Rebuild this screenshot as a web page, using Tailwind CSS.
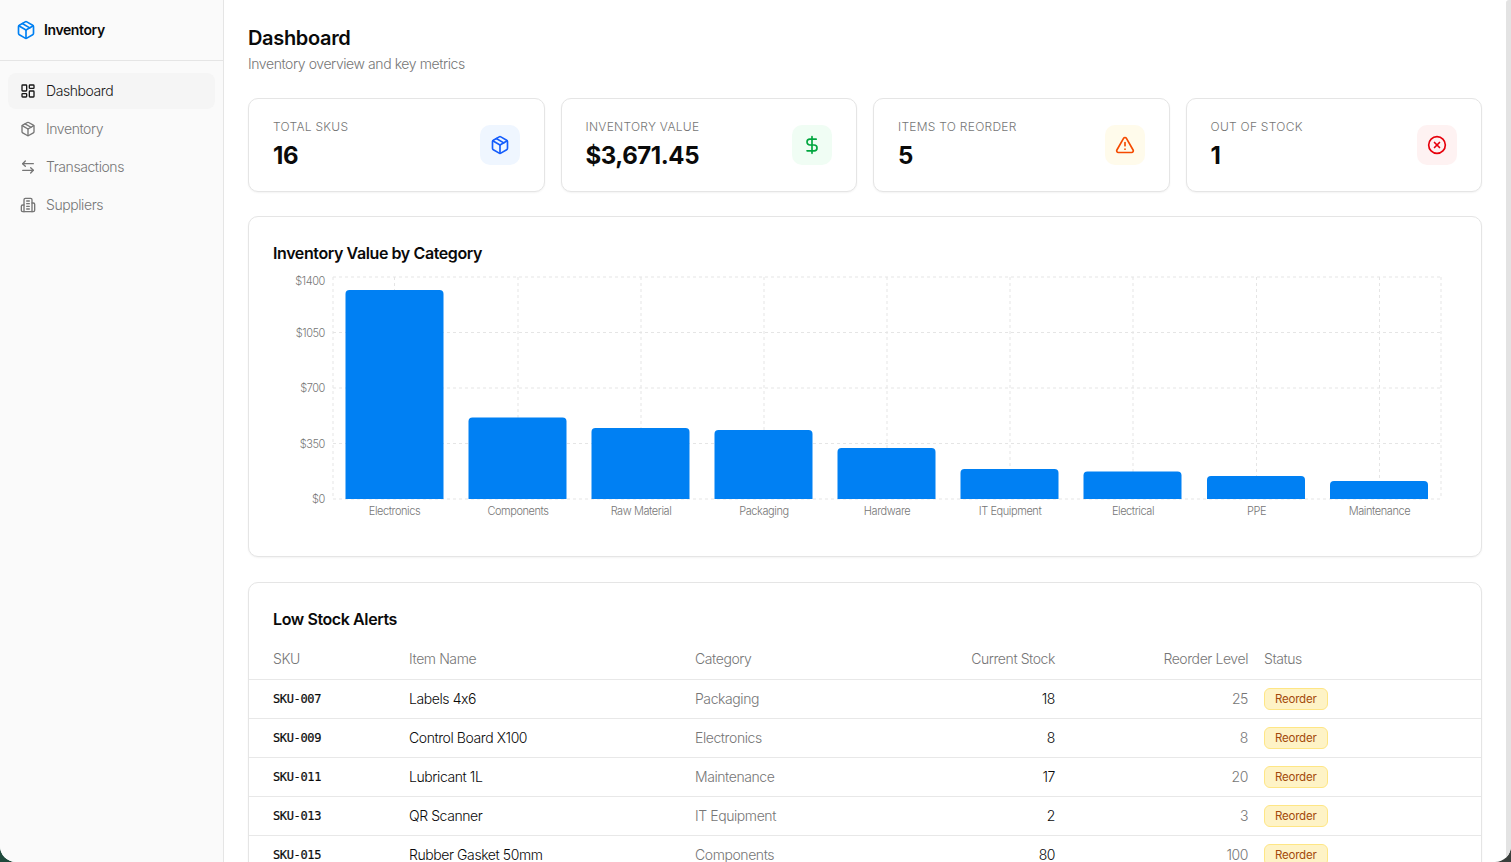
<!DOCTYPE html>
<html lang="en">
<head>
<meta charset="utf-8">
<title>Inventory</title>
<script src="https://cdn.jsdelivr.net/npm/@tailwindcss/browser@4"></script>
</head>
<body class="h-screen overflow-hidden bg-[linear-gradient(90deg,#1f4a3c,#3a3f3c)] font-['Inter',sans-serif] font-[350] tracking-[-0.42px] text-[#0a0a0a] [font-feature-settings:'calt'_0]">
<div class="relative flex h-[862px] overflow-hidden rounded-b-[16px] bg-white">
  <aside class="w-[224px] shrink-0 border-r border-[#e5e5e5] bg-[#fafafa]">
    <div class="flex h-[61px] items-center gap-[8px] border-b border-[#e5e5e5] pb-[1px] pl-[16px]">
      <svg class="size-[20px] text-[#0080f2]" viewBox="0 0 24 24" fill="none" stroke="currentColor" stroke-width="2" stroke-linecap="round" stroke-linejoin="round"><path d="m7.5 4.27 9 5.15"/><path d="M21 8a2 2 0 0 0-1-1.73l-7-4a2 2 0 0 0-2 0l-7 4A2 2 0 0 0 3 8v8a2 2 0 0 0 1 1.73l7 4a2 2 0 0 0 2 0l7-4A2 2 0 0 0 21 16Z"/><path d="m3.3 7 8.7 5 8.7-5"/><path d="M12 22V12"/></svg>
      <span class="text-[14px] font-semibold tracking-[-0.4px]">Inventory</span>
    </div>
    <nav class="flex flex-col gap-[2px] px-[8px] pt-[12px] text-[14px] text-[#767676]">
      <a class="flex h-[36px] items-center gap-[10px] rounded-[8px] bg-[#f5f5f5] pb-[1px] pl-[12px] text-[#171717]">
        <svg class="size-[16px]" viewBox="0 0 24 24" fill="none" stroke="currentColor" stroke-width="2" stroke-linecap="round" stroke-linejoin="round"><rect x="3" y="3" width="7" height="9" rx="1"/><rect x="14" y="3" width="7" height="5" rx="1"/><rect x="14" y="12" width="7" height="9" rx="1"/><rect x="3" y="16" width="7" height="5" rx="1"/></svg>
        Dashboard
      </a>
      <a class="flex h-[36px] items-center gap-[10px] rounded-[8px] pb-[1px] pl-[12px]">
        <svg class="size-[16px]" viewBox="0 0 24 24" fill="none" stroke="currentColor" stroke-width="2" stroke-linecap="round" stroke-linejoin="round"><path d="m7.5 4.27 9 5.15"/><path d="M21 8a2 2 0 0 0-1-1.73l-7-4a2 2 0 0 0-2 0l-7 4A2 2 0 0 0 3 8v8a2 2 0 0 0 1 1.73l7 4a2 2 0 0 0 2 0l7-4A2 2 0 0 0 21 16Z"/><path d="m3.3 7 8.7 5 8.7-5"/><path d="M12 22V12"/></svg>
        Inventory
      </a>
      <a class="flex h-[36px] items-center gap-[10px] rounded-[8px] pb-[1px] pl-[12px]">
        <svg class="size-[16px]" viewBox="0 0 24 24" fill="none" stroke="currentColor" stroke-width="2" stroke-linecap="round" stroke-linejoin="round"><path d="M8 3 4 7l4 4"/><path d="M4 7h16"/><path d="m16 21 4-4-4-4"/><path d="M20 17H4"/></svg>
        Transactions
      </a>
      <a class="flex h-[36px] items-center gap-[10px] rounded-[8px] pb-[1px] pl-[12px]">
        <svg class="size-[16px]" viewBox="0 0 24 24" fill="none" stroke="currentColor" stroke-width="2" stroke-linecap="round" stroke-linejoin="round"><path d="M6 22V4a2 2 0 0 1 2-2h8a2 2 0 0 1 2 2v18Z"/><path d="M6 12H4a2 2 0 0 0-2 2v6a2 2 0 0 0 2 2h2"/><path d="M18 9h2a2 2 0 0 1 2 2v9a2 2 0 0 1-2 2h-2"/><path d="M10 6h4"/><path d="M10 10h4"/><path d="M10 14h4"/><path d="M10 18h4"/></svg>
        Suppliers
      </a>
    </nav>
  </aside>

  <main class="min-w-0 flex-1 pl-[24px] pr-[29px] pt-[24px]">
    <h1 class="text-[20px] leading-[28px] font-semibold tracking-[-0.33px]">Dashboard</h1>
    <p class="mt-[2px] text-[14px] leading-[20px] text-[#767676]">Inventory overview and key metrics</p>

    <section class="mt-[24px] grid grid-cols-4 gap-[16px]">
      <div class="flex items-center justify-between rounded-[10px] border border-[#e5e5e5] bg-white px-[24px] py-[20px] shadow-xs">
        <div>
          <p class="text-[12px] leading-[16px] tracking-[0.27px] text-[#767676]">TOTAL SKUS</p>
          <p class="mt-[5px] text-[24px] leading-[31px] font-bold tracking-[-0.44px]">16</p>
        </div>
        <div class="flex size-[40px] items-center justify-center rounded-[10px] bg-blue-50 text-blue-600">
          <svg class="size-[20px]" viewBox="0 0 24 24" fill="none" stroke="currentColor" stroke-width="2" stroke-linecap="round" stroke-linejoin="round"><path d="m7.5 4.27 9 5.15"/><path d="M21 8a2 2 0 0 0-1-1.73l-7-4a2 2 0 0 0-2 0l-7 4A2 2 0 0 0 3 8v8a2 2 0 0 0 1 1.73l7 4a2 2 0 0 0 2 0l7-4A2 2 0 0 0 21 16Z"/><path d="m3.3 7 8.7 5 8.7-5"/><path d="M12 22V12"/></svg>
        </div>
      </div>
      <div class="flex items-center justify-between rounded-[10px] border border-[#e5e5e5] bg-white px-[24px] py-[20px] shadow-xs">
        <div>
          <p class="text-[12px] leading-[16px] tracking-[0.27px] text-[#767676]">INVENTORY VALUE</p>
          <p class="mt-[5px] text-[24px] leading-[31px] font-bold tracking-[-0.44px]">$3,671.45</p>
        </div>
        <div class="flex size-[40px] items-center justify-center rounded-[10px] bg-green-50 text-green-600">
          <svg class="size-[20px]" viewBox="0 0 24 24" fill="none" stroke="currentColor" stroke-width="2" stroke-linecap="round" stroke-linejoin="round"><line x1="12" x2="12" y1="2" y2="22"/><path d="M17 5H9.5a3.5 3.5 0 0 0 0 7h5a3.5 3.5 0 0 1 0 7H6"/></svg>
        </div>
      </div>
      <div class="flex items-center justify-between rounded-[10px] border border-[#e5e5e5] bg-white px-[24px] py-[20px] shadow-xs">
        <div>
          <p class="text-[12px] leading-[16px] tracking-[0.27px] text-[#767676]">ITEMS TO REORDER</p>
          <p class="mt-[5px] text-[24px] leading-[31px] font-bold tracking-[-0.44px]">5</p>
        </div>
        <div class="flex size-[40px] items-center justify-center rounded-[10px] bg-amber-50 text-orange-600">
          <svg class="size-[20px]" viewBox="0 0 24 24" fill="none" stroke="currentColor" stroke-width="2" stroke-linecap="round" stroke-linejoin="round"><path d="m21.73 18-8-14a2 2 0 0 0-3.48 0l-8 14A2 2 0 0 0 4 21h16a2 2 0 0 0 1.73-3"/><path d="M12 9v4"/><path d="M12 17h.01"/></svg>
        </div>
      </div>
      <div class="flex items-center justify-between rounded-[10px] border border-[#e5e5e5] bg-white px-[24px] py-[20px] shadow-xs">
        <div>
          <p class="text-[12px] leading-[16px] tracking-[0.27px] text-[#767676]">OUT OF STOCK</p>
          <p class="mt-[5px] text-[24px] leading-[31px] font-bold tracking-[-0.44px]">1</p>
        </div>
        <div class="flex size-[40px] items-center justify-center rounded-[10px] bg-red-50 text-red-600">
          <svg class="size-[20px]" viewBox="0 0 24 24" fill="none" stroke="currentColor" stroke-width="2" stroke-linecap="round" stroke-linejoin="round"><circle cx="12" cy="12" r="10"/><path d="m15 9-6 6"/><path d="m9 9 6 6"/></svg>
        </div>
      </div>
    </section>

    <section class="mt-[24px] h-[341px] rounded-[10px] border border-[#e5e5e5] bg-white px-[24px] pt-[25px] shadow-xs">
      <h2 class="mb-[8px] text-[16px] leading-[22px] font-semibold tracking-[-0.4px]">Inventory Value by Category</h2>
      <svg class="block" width="1184" height="260" viewBox="0 0 1184 260" font-family="Inter, sans-serif" font-size="11" fill="#767676" letter-spacing="-0.42">
        <g stroke="#e5e5e5" stroke-dasharray="3 3" fill="none">
          <path d="M60 5H1168M60 60.5H1168M60 116H1168M60 171.500H1168M60 227H1168"/>
          <path d="M60 5V227M121.500 5V227M245 5V227M368 5V227M491 5V227M614 5V227M737 5V227M860 5V227M983.500 5V227M1106.500 5V227M1168 5V227"/>
        </g>
        <g fill="#0080f3">
          <path d="M72.500 227V22a4 4 0 0 1 4-4h90a4 4 0 0 1 4 4V227Z"/>
          <path d="M195.500 227V149.500a4 4 0 0 1 4-4h90a4 4 0 0 1 4 4V227Z"/>
          <path d="M318.500 227V160a4 4 0 0 1 4-4h90a4 4 0 0 1 4 4V227Z"/>
          <path d="M441.500 227V162a4 4 0 0 1 4-4h90a4 4 0 0 1 4 4V227Z"/>
          <path d="M564.500 227V180a4 4 0 0 1 4-4h90a4 4 0 0 1 4 4V227Z"/>
          <path d="M687.500 227V201a4 4 0 0 1 4-4h90a4 4 0 0 1 4 4V227Z"/>
          <path d="M810.500 227V203.500a4 4 0 0 1 4-4h90a4 4 0 0 1 4 4V227Z"/>
          <path d="M934 227V208a4 4 0 0 1 4-4h90a4 4 0 0 1 4 4V227Z"/>
          <path d="M1057 227V213a4 4 0 0 1 4-4h90a4 4 0 0 1 4 4V227Z"/>
        </g>
        <g text-anchor="end">
          <text x="52" y="13">$1400</text>
          <text x="52" y="64.500">$1050</text>
          <text x="52" y="120">$700</text>
          <text x="52" y="175.500">$350</text>
          <text x="52" y="231">$0</text>
        </g>
        <g text-anchor="middle">
          <text x="121.500" y="243">Electronics</text>
          <text x="245" y="243">Components</text>
          <text x="368" y="243">Raw Material</text>
          <text x="491" y="243">Packaging</text>
          <text x="614" y="243">Hardware</text>
          <text x="737" y="243">IT Equipment</text>
          <text x="860" y="243">Electrical</text>
          <text x="983.500" y="243">PPE</text>
          <text x="1106.500" y="243">Maintenance</text>
        </g>
      </svg>
    </section>

    <section class="mt-[25px] rounded-[10px] border border-[#e5e5e5] bg-white pt-[24px] shadow-xs">
      <h2 class="px-[24px] text-[16px] leading-[24px] font-semibold tracking-[-0.4px]">Low Stock Alerts</h2>
      <table class="mt-[8px] w-full table-fixed border-collapse text-[14px]">
        <colgroup>
          <col class="w-[152px]"><col class="w-[286px]"><col class="w-[200px]"><col class="w-[176px]"><col class="w-[193px]"><col>
        </colgroup>
        <thead>
          <tr class="h-[40px] border-b border-[#e8e8e8] text-[#767676]">
            <th class="pl-[24px] text-left font-[350]">SKU</th>
            <th class="px-[8px] text-left font-[350]">Item Name</th>
            <th class="px-[8px] text-left font-[350]">Category</th>
            <th class="px-[8px] text-right font-[350]">Current Stock</th>
            <th class="px-[8px] text-right font-[350]">Reorder Level</th>
            <th class="px-[8px] text-left font-[350]">Status</th>
          </tr>
        </thead>
        <tbody>
          <tr class="h-[39px] border-b border-[#e8e8e8]">
            <td class="pl-[24px] font-['DejaVu_Sans_Mono',monospace] text-[12px] tracking-[-0.37px] [-webkit-text-stroke:0.2px]">SKU-007</td>
            <td class="px-[8px]">Labels 4x6</td>
            <td class="px-[8px] text-[#767676]">Packaging</td>
            <td class="px-[8px] text-right">18</td>
            <td class="px-[8px] text-right text-[#767676]">25</td>
            <td class="px-[8px]"><span class="inline-flex h-[22px] items-center rounded-[6px] border border-amber-200 bg-amber-100 px-[10px] text-[11.5px] font-normal tracking-[-0.22px] text-[#a34a0c]">Reorder</span></td>
          </tr>
          <tr class="h-[39px] border-b border-[#e8e8e8]">
            <td class="pl-[24px] font-['DejaVu_Sans_Mono',monospace] text-[12px] tracking-[-0.37px] [-webkit-text-stroke:0.2px]">SKU-009</td>
            <td class="px-[8px]">Control Board X100</td>
            <td class="px-[8px] text-[#767676]">Electronics</td>
            <td class="px-[8px] text-right">8</td>
            <td class="px-[8px] text-right text-[#767676]">8</td>
            <td class="px-[8px]"><span class="inline-flex h-[22px] items-center rounded-[6px] border border-amber-200 bg-amber-100 px-[10px] text-[11.5px] font-normal tracking-[-0.22px] text-[#a34a0c]">Reorder</span></td>
          </tr>
          <tr class="h-[39px] border-b border-[#e8e8e8]">
            <td class="pl-[24px] font-['DejaVu_Sans_Mono',monospace] text-[12px] tracking-[-0.37px] [-webkit-text-stroke:0.2px]">SKU-011</td>
            <td class="px-[8px]">Lubricant 1L</td>
            <td class="px-[8px] text-[#767676]">Maintenance</td>
            <td class="px-[8px] text-right">17</td>
            <td class="px-[8px] text-right text-[#767676]">20</td>
            <td class="px-[8px]"><span class="inline-flex h-[22px] items-center rounded-[6px] border border-amber-200 bg-amber-100 px-[10px] text-[11.5px] font-normal tracking-[-0.22px] text-[#a34a0c]">Reorder</span></td>
          </tr>
          <tr class="h-[39px] border-b border-[#e8e8e8]">
            <td class="pl-[24px] font-['DejaVu_Sans_Mono',monospace] text-[12px] tracking-[-0.37px] [-webkit-text-stroke:0.2px]">SKU-013</td>
            <td class="px-[8px]">QR Scanner</td>
            <td class="px-[8px] text-[#767676]">IT Equipment</td>
            <td class="px-[8px] text-right">2</td>
            <td class="px-[8px] text-right text-[#767676]">3</td>
            <td class="px-[8px]"><span class="inline-flex h-[22px] items-center rounded-[6px] border border-amber-200 bg-amber-100 px-[10px] text-[11.5px] font-normal tracking-[-0.22px] text-[#a34a0c]">Reorder</span></td>
          </tr>
          <tr class="h-[39px] border-b border-[#e8e8e8]">
            <td class="pl-[24px] font-['DejaVu_Sans_Mono',monospace] text-[12px] tracking-[-0.37px] [-webkit-text-stroke:0.2px]">SKU-015</td>
            <td class="px-[8px]">Rubber Gasket 50mm</td>
            <td class="px-[8px] text-[#767676]">Components</td>
            <td class="px-[8px] text-right">80</td>
            <td class="px-[8px] text-right text-[#767676]">100</td>
            <td class="px-[8px]"><span class="inline-flex h-[22px] items-center rounded-[6px] border border-amber-200 bg-amber-100 px-[10px] text-[11.5px] font-normal tracking-[-0.22px] text-[#a34a0c]">Reorder</span></td>
          </tr>
        </tbody>
      </table>
    </section>
  </main>
  <div class="absolute top-0 right-0 h-full w-[5px] rounded-tl-[3px] bg-[#e3e3e3]"></div>
</div>
</body>
</html>
